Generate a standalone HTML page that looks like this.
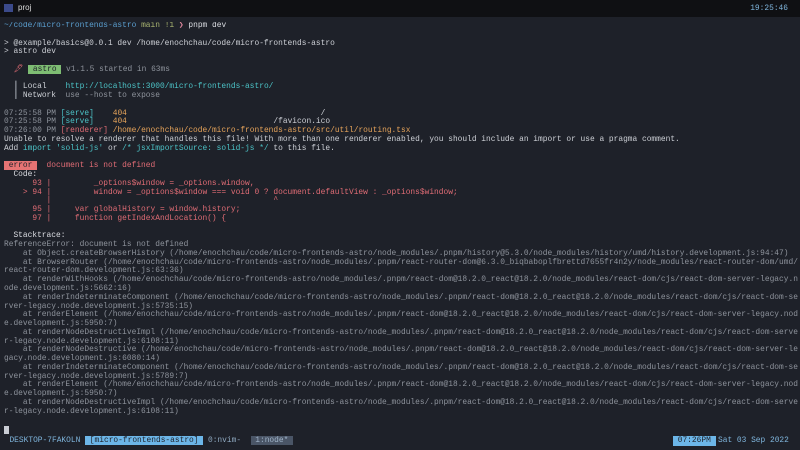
<!DOCTYPE html>
<html><head><meta charset="utf-8"><style>
html,body{margin:0;padding:0;width:800px;height:450px;overflow:hidden;background:#1e2129;}
.tb{position:absolute;left:0;top:0;width:800px;height:17px;background:#0f1013;}
.tb .ic{position:absolute;left:4px;top:4px;width:9px;height:8px;background:#3b4a8a;}
.tb .t{position:absolute;left:18px;top:3px;font:8px "Liberation Sans",sans-serif;color:#ddd;}
pre{position:absolute;left:4px;top:22px;margin:0;font-family:"Liberation Mono",monospace;font-size:7.88px;line-height:8.76px;color:#cdd0d6;white-space:pre;width:796px;overflow:hidden;}
.g{color:#8e939c}.b{color:#5b9fd0}.y{color:#a8b470}.c{color:#4cc3c7}.o{color:#e5a35a}.r{color:#e06c75}.w{color:#dcdee3}
.badge{background:#7ebd73;color:#1e2129}
.err{background:#e57373;color:#1e2129}
.pk{color:#e38aa0}
.sb{position:absolute;left:0;top:436px;width:800px;height:10px;font-family:"Liberation Mono",monospace;font-size:7.88px;line-height:10px;color:#7fb5dc;white-space:pre;}
.cur{position:absolute;left:4px;top:426px;width:5px;height:8px;background:#c9ccd3;}
.time{position:absolute;right:12px;top:4px;font-family:"Liberation Mono",monospace;font-size:7.88px;color:#7fb5dc;}
</style></head><body>
<div class="tb"><div class="ic"></div><div class="t">proj</div></div>
<div class="time">19:25:46</div>
<pre><span class="b">~/code/micro-frontends-astro</span> <span class="y">main !1</span> <span class="pk">❯</span> <span class="w">pnpm dev</span>

&gt; @example/basics@0.0.1 dev /home/enochchau/code/micro-frontends-astro
&gt; astro dev

  <span class="r">🖋</span> <span class="badge"> astro </span> <span class="g">v1.1.5 started in 63ms</span>

  <span class="g">┃</span> Local    <span class="c">http://localhost:3000/micro-frontends-astro/</span>
  <span class="g">┃</span> Network  <span class="g">use --host to expose</span>

<span class="g">07:25:58 PM</span> <span class="c">[serve]</span>    <span class="o">404</span>                                         /
<span class="g">07:25:58 PM</span> <span class="c">[serve]</span>    <span class="o">404</span>                               /favicon.ico
<span class="g">07:26:00 PM</span> <span class="r">[renderer]</span> <span class="o">/home/enochchau/code/micro-frontends-astro/src/util/routing.tsx</span>
Unable to resolve a renderer that handles this file! With more than one renderer enabled, you should include an import or use a pragma comment.
Add <span class="c">import 'solid-js'</span> or <span class="c">/* jsxImportSource: solid-js */</span> to this file.

<span class="err"> error </span>  <span class="r">document is not defined</span>
  <span class="w">Code:</span>
<span class="r">      93 |         _options$window = _options.window,
    &gt; 94 |         window = _options$window === void 0 ? document.defaultView : _options$window;
         |                                               ^
      95 |     var globalHistory = window.history;
      97 |     function getIndexAndLocation() {</span>

  <span class="w">Stacktrace:</span>
<span class="g">ReferenceError: document is not defined
    at Object.createBrowserHistory (/home/enochchau/code/micro-frontends-astro/node_modules/.pnpm/history@5.3.0/node_modules/history/umd/history.development.js:94:47)
    at BrowserRouter (/home/enochchau/code/micro-frontends-astro/node_modules/.pnpm/react-router-dom@6.3.0_biqbaboplfbrettd7655fr4n2y/node_modules/react-router-dom/umd/
react-router-dom.development.js:63:36)
    at renderWithHooks (/home/enochchau/code/micro-frontends-astro/node_modules/.pnpm/react-dom@18.2.0_react@18.2.0/node_modules/react-dom/cjs/react-dom-server-legacy.n
ode.development.js:5662:16)
    at renderIndeterminateComponent (/home/enochchau/code/micro-frontends-astro/node_modules/.pnpm/react-dom@18.2.0_react@18.2.0/node_modules/react-dom/cjs/react-dom-se
rver-legacy.node.development.js:5735:15)
    at renderElement (/home/enochchau/code/micro-frontends-astro/node_modules/.pnpm/react-dom@18.2.0_react@18.2.0/node_modules/react-dom/cjs/react-dom-server-legacy.nod
e.development.js:5950:7)
    at renderNodeDestructiveImpl (/home/enochchau/code/micro-frontends-astro/node_modules/.pnpm/react-dom@18.2.0_react@18.2.0/node_modules/react-dom/cjs/react-dom-serve
r-legacy.node.development.js:6108:11)
    at renderNodeDestructive (/home/enochchau/code/micro-frontends-astro/node_modules/.pnpm/react-dom@18.2.0_react@18.2.0/node_modules/react-dom/cjs/react-dom-server-le
gacy.node.development.js:6080:14)
    at renderIndeterminateComponent (/home/enochchau/code/micro-frontends-astro/node_modules/.pnpm/react-dom@18.2.0_react@18.2.0/node_modules/react-dom/cjs/react-dom-se
rver-legacy.node.development.js:5789:7)
    at renderElement (/home/enochchau/code/micro-frontends-astro/node_modules/.pnpm/react-dom@18.2.0_react@18.2.0/node_modules/react-dom/cjs/react-dom-server-legacy.nod
e.development.js:5950:7)
    at renderNodeDestructiveImpl (/home/enochchau/code/micro-frontends-astro/node_modules/.pnpm/react-dom@18.2.0_react@18.2.0/node_modules/react-dom/cjs/react-dom-serve
r-legacy.node.development.js:6108:11)</span></pre>
<div class="cur"></div>
<div class="sb">  DESKTOP-7FAKOLN <span style="background:#6cb6e8;color:#1e2129"> [micro-frontends-astro] </span> <span style="color:#8fa9c0">0:nvim-</span>  <span style="background:#4a5566;color:#9fb3c8"> 1:node* </span><span style="position:absolute;left:673px;top:0;background:#6cb6e8;color:#1e2129"> 07:26PM </span><span style="position:absolute;left:718px;top:0">Sat 03 Sep 2022</span></div>
</body></html>
